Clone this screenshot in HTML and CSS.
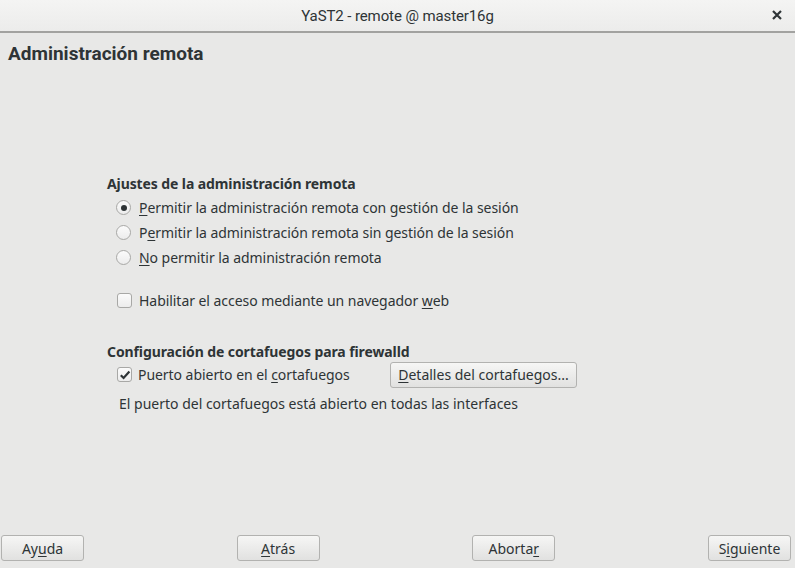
FILE: index.html
```html
<!DOCTYPE html>
<html lang="es">
<head>
<meta charset="utf-8">
<title>YaST2 - remote @ master16g</title>
<link rel="stylesheet" href="styles.css">
</head>
<body>
<div class="window">
  <header class="titlebar">
    <span class="title">YaST2 - remote @ master16g</span>
    <span class="close">
      <svg width="10" height="10" viewBox="0 0 10 10"><path d="M1 1 L9 9 M9 1 L1 9" stroke="#2e3436" stroke-width="2.2" fill="none"/></svg>
    </span>
  </header>
  <main class="content">
    <h1 class="heading">Administración remota</h1>
    <div class="form">
      <section class="group">
        <h2 class="group-title">Ajustes de la administración remota</h2>
        <div class="options">
          <label class="row"><span class="radio checked"></span><span><u>P</u>ermitir la administración remota con gestión de la sesión</span></label>
          <label class="row"><span class="radio"></span><span>P<u>e</u>rmitir la administración remota sin gestión de la sesión</span></label>
          <label class="row"><span class="radio"></span><span><u>N</u>o permitir la administración remota</span></label>
        </div>
        <label class="row web"><span class="check"></span><span>Habilitar el acceso mediante un navegador <u>w</u>eb</span></label>
      </section>
      <section class="group fw">
        <h2 class="group-title">Configuración de cortafuegos para firewalld</h2>
        <div class="fw-row">
          <label class="row port"><span class="check checked"><svg width="12" height="12" viewBox="0 0 12 12"><path d="M1.8 6.2 L4.6 9 L10.4 2.6" stroke="#2e3436" stroke-width="2.2" fill="none"/></svg></span><span>Puerto abierto en el <u>c</u>ortafuegos</span></label>
          <button class="btn details"><u>D</u>etalles del cortafuegos...</button>
        </div>
        <p class="note">El puerto del cortafuegos está abierto en todas las interfaces</p>
      </section>
    </div>
    <footer class="buttons">
      <button class="btn nav">Ay<u>u</u>da</button>
      <button class="btn nav"><u>A</u>trás</button>
      <button class="btn nav">Aborta<u>r</u></button>
      <button class="btn nav"><span>S<u>i</u>guiente</span></button>
    </footer>
  </main>
</div>
</body>
</html>
```

FILE: styles.css
```css
html, body {
  margin: 0;
  padding: 0;
}
body {
  width: 795px;
  height: 568px;
  overflow: hidden;
  background: #e8e8e7;
  font-family: "Noto Sans", "DejaVu Sans", sans-serif;
  color: #2e3436;
}
.window {
  display: flex;
  flex-direction: column;
  height: 568px;
}
.titlebar {
  height: 31px;
  flex: none;
  background: linear-gradient(#f4f4f3, #ececeb);
  border-bottom: 2px solid #a2a2a0;
  display: flex;
  align-items: center;
  justify-content: center;
  position: relative;
}
.title {
  font-family: Roboto, "Noto Sans", sans-serif;
  font-size: 15px;
  letter-spacing: -0.1px;
  color: #2e3436;
}
.close {
  position: absolute;
  right: 13px;
  top: 10px;
  width: 10px;
  height: 10px;
  display: flex;
}
.content {
  flex: 1;
  display: flex;
  flex-direction: column;
}
.heading {
  margin: 9px 0 0 8px;
  font-family: Roboto, "Noto Sans", sans-serif;
  font-size: 19px;
  font-weight: bold;
  line-height: 24px;
  color: #2e3436;
}
.form {
  margin: 108px 0 0 107px;
  display: flex;
  flex-direction: column;
  font-size: 14px;
}
.group-title {
  margin: 0;
  font-size: 14px;
  font-weight: bold;
  line-height: 20px;
  letter-spacing: -0.1px;
}
.options {
  margin: 1px 0 0 9px;
  display: flex;
  flex-direction: column;
}
.row {
  display: flex;
  align-items: center;
  height: 25px;
  gap: 8px;
  white-space: nowrap;
  letter-spacing: -0.05px;
}
u {
  text-decoration: underline;
  text-underline-offset: 2px;
}
.radio {
  width: 15px;
  height: 15px;
  box-sizing: border-box;
  border: 1px solid #a8a8a6;
  border-radius: 50%;
  background: linear-gradient(#fbfbfb, #ececec);
  display: flex;
  align-items: center;
  justify-content: center;
}
.radio.checked::after {
  content: "";
  width: 6px;
  height: 6px;
  border-radius: 50%;
  background: #2e3436;
}
.check {
  width: 15px;
  height: 15px;
  box-sizing: border-box;
  border: 1px solid #a8a8a6;
  border-radius: 3px;
  background: linear-gradient(#fbfbfb, #ececec);
  display: flex;
  align-items: center;
  justify-content: center;
  flex: none;
}
.web {
  margin: 18px 0 0 10px;
  gap: 7px;
}
.fw {
  margin-top: 29px;
}
.fw-row {
  display: flex;
  align-items: center;
  margin: 0 0 0 10px;
  height: 25px;
}
.port {
  gap: 6px;
  width: 273px;
}
.btn {
  font-family: "Noto Sans", "DejaVu Sans", sans-serif;
  font-size: 14px;
  color: #2e3436;
  height: 26px;
  box-sizing: border-box;
  border: 1px solid #b2b2b0;
  border-radius: 3px;
  background: linear-gradient(#f6f6f5, #e1e1e0);
  padding: 0 6px;
  display: flex;
  align-items: center;
  justify-content: center;
}
.details {
  width: 187px;
}
.note {
  margin: 4px 0 0 12px;
  line-height: 25px;
  font-size: 14px;
}
.buttons {
  margin-top: auto;
  margin-bottom: 7px;
  padding: 0 4px 0 1px;
  display: flex;
  justify-content: space-between;
}
.nav {
  width: 83px;
}
```
